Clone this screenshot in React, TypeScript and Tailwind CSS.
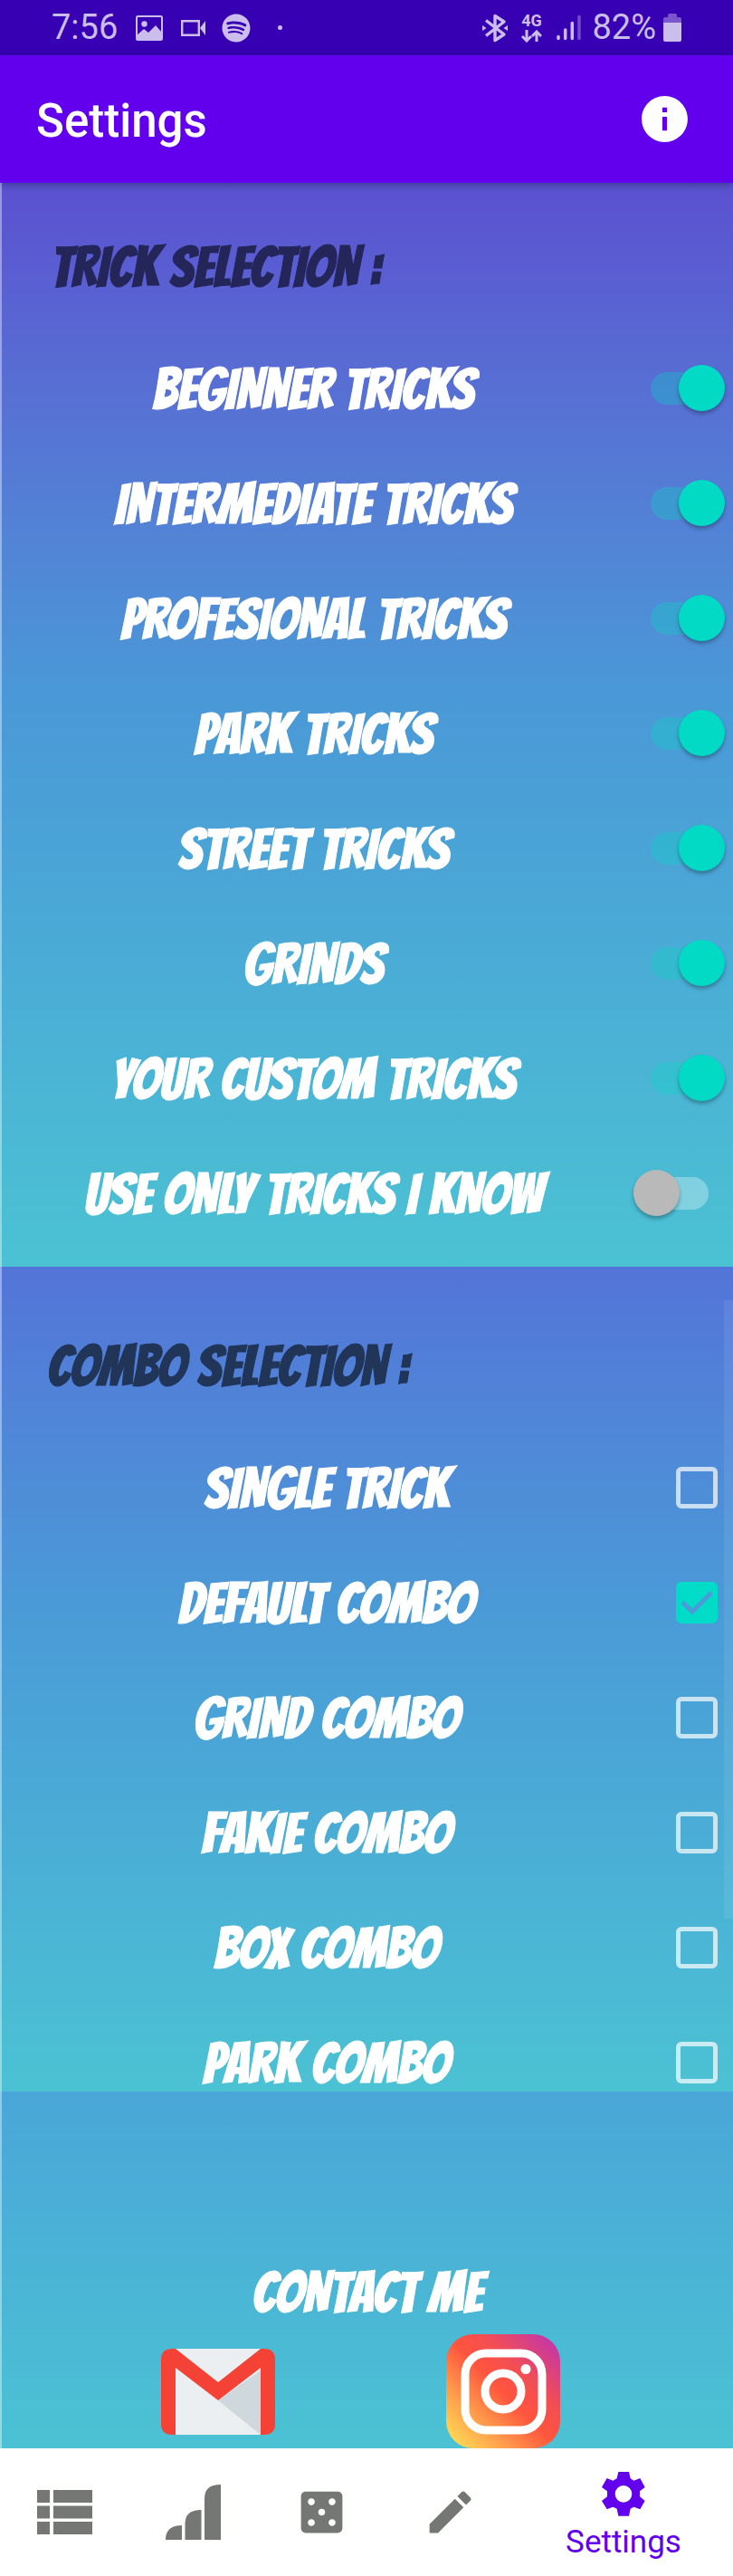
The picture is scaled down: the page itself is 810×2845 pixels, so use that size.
import { useState } from "react";
import type { ReactNode } from "react";
import { FaSpotify } from "react-icons/fa";
import { MdCasino, MdEdit, MdInfo } from "react-icons/md";

const TRICKS = [
  { label: "BEGINNER TRICKS", on: true },
  { label: "INTERMEDIATE TRICKS", on: true },
  { label: "PROFESIONAL TRICKS", on: true },
  { label: "PARK TRICKS", on: true },
  { label: "STREET TRICKS", on: true },
  { label: "GRINDS", on: true },
  { label: "YOUR CUSTOM TRICKS", on: true },
  { label: "USE ONLY TRICKS I KNOW", on: false },
];

const COMBOS = [
  { label: "SINGLE TRICK", on: false },
  { label: "DEFAULT COMBO", on: true },
  { label: "GRIND COMBO", on: false },
  { label: "FAKIE COMBO", on: false },
  { label: "BOX COMBO", on: false },
  { label: "PARK COMBO", on: false },
];

const comic =
  "font-['Bangers','Liberation_Sans_Narrow','Liberation_Sans',sans-serif] font-normal text-[63px] leading-[47px] whitespace-nowrap [-webkit-text-stroke:1px_currentColor]";

function StatusBar() {
  return (
    <div className="flex h-[61px] items-center justify-between bg-[#3700b3] pr-[57px] pl-[57px] text-[38px] text-[#cbbdec]">
      <div className="flex items-center">
        <span>7:56</span>
        <svg viewBox="0 0 30 28" className="ml-5 h-7 w-[30px]" fill="currentColor">
          <rect x="1" y="1" width="28" height="26" rx="1.5" fill="none" stroke="currentColor" strokeWidth="2" />
          <circle cx="9.500" cy="9.500" r="3.200" />
          <path d="M1 22l8-7 5 4 8-8 7 8v8H1z" />
        </svg>
        <svg viewBox="0 0 27 18" className="ml-5 h-[18px] w-[27px]">
          <path d="M1.200 1.200h18.600v15.600H1.200z" fill="none" stroke="currentColor" strokeWidth="2.400" />
          <path d="m21 9 6-8v16z" fill="currentColor" />
        </svg>
        <FaSpotify className="ml-[18px] size-8" />
        <span className="ml-[30px] size-[5px] rounded-full bg-[#cbbdec]" />
      </div>
      <div className="flex items-center">
        <svg viewBox="0 0 28 32" className="h-8 w-7" fill="none" stroke="currentColor" strokeWidth="3.400">
          <path d="M4 7.500 24 23 14 29.500v-27L24 9 4 24.500" strokeLinejoin="round" />
          <path d="m0 13 4.500 3L0 19zM28 13l-4.500 3 4.500 3z" fill="currentColor" stroke="none" />
        </svg>
        <span className="ml-[14px] flex flex-col items-center text-[18px] leading-4 font-bold">
          4G
          <svg viewBox="0 0 24 14" className="mt-0.5 h-3.5 w-6" fill="none" stroke="currentColor" strokeWidth="3">
            <path d="M7 0v11M2 7l5 5 5-5M18 13V2M13 7l5-5 5 5" />
          </svg>
        </span>
        <svg viewBox="0 0 27 30" className="ml-4 h-[30px] w-[27px]" fill="none" stroke="currentColor" strokeWidth="3.500" strokeLinecap="round">
          <path d="M2 24.500v2M9.700 17v9.500M17.300 9.500v17" />
          <path d="M25 2.500v24" opacity=".4" />
        </svg>
        <span className="ml-3">82%</span>
        <svg viewBox="0 0 20 31" className="ml-2 h-[31px] w-5" fill="currentColor">
          <path d="M0 10V6q0-2 2-2h3V2q0-2 2-2h6q2 0 2 2v2h3q2 0 2 2v4z" opacity=".45" />
          <path d="M0 10h20v19q0 2-2 2H2q-2 0-2-2z" />
        </svg>
      </div>
    </div>
  );
}

function Switch({ id, initial }: { id: string; initial: boolean }) {
  const [on, setOn] = useState(initial);
  return (
    <input
      id={id}
      type="checkbox"
      role="switch"
      checked={on}
      onChange={() => setOn(!on)}
      className="relative mr-[27px] mb-0.5 h-9 w-16 shrink-0 appearance-none rounded-full bg-white/30 before:absolute before:-top-2 before:-left-[19px] before:size-[51px] before:rounded-full before:bg-[#b9b9b9] before:shadow-[0_3px_4px_rgba(0,0,0,0.3)] checked:bg-[#03dac5]/30 checked:before:left-[31px] checked:before:bg-[#03dac5]"
    />
  );
}

function Check({ id, initial }: { id: string; initial: boolean }) {
  const [on, setOn] = useState(initial);
  return (
    <span className="relative mr-[17px] mb-0.5 grid size-[46px] shrink-0">
      <input
        id={id}
        type="checkbox"
        checked={on}
        onChange={() => setOn(!on)}
        className="size-[46px] appearance-none rounded-md border-[5px] border-white/70 checked:border-[#00dcc8] checked:bg-[#00dcc8]"
      />
      {on && (
        <svg viewBox="0 0 46 46" className="pointer-events-none absolute inset-0" fill="none" stroke="#4a9bd7" strokeWidth="5">
          <path d="m7 22.500 11 10.500 21-21" />
        </svg>
      )}
    </span>
  );
}

function Row({ id, label, children }: { id: string; label: string; children: ReactNode }) {
  return (
    <li className="flex h-[127px] items-center group-data-[clip=true]/list:last:h-[95px] group-data-[clip=true]/list:last:pt-8">
      <label htmlFor={id} className={`${comic} flex-1 pr-7 text-center text-white`}>
        {label}
      </label>
      {children}
    </li>
  );
}

function GmailLogo() {
  return (
    <svg viewBox="0 0 126 95" className="h-[95px] w-[126px]">
      <rect x="10" width="106" height="95" fill="#eceff1" />
      <path d="M63 57 110 24v71z" fill="#cfd8dc" />
      <path d="M16 0 63 37 110 0h4q12 0 12 12v71q0 12-12 12h-4V21L63 57 16 21v74h-4Q0 95 0 83V12Q0 0 12 0z" fill="#f44336" />
    </svg>
  );
}

function InstagramLogo() {
  return (
    <svg viewBox="0 0 126 126" className="size-[126px]">
      <defs>
        <linearGradient id="ig" x1="0" y1="1" x2="1" y2="0">
          <stop offset="4%" stopColor="#ffdd55" />
          <stop offset="28%" stopColor="#ff9a4c" />
          <stop offset="50%" stopColor="#ff543e" />
          <stop offset="66%" stopColor="#f34e53" />
          <stop offset="96%" stopColor="#c135ad" />
        </linearGradient>
      </defs>
      <rect width="126" height="126" rx="30" fill="url(#ig)" />
      <g fill="none" stroke="#fff" strokeWidth="9">
        <rect x="21" y="21" width="85" height="85" rx="23" />
        <circle cx="63" cy="63" r="20" />
      </g>
      <circle cx="88" cy="38.500" r="5.500" fill="#fff" />
    </svg>
  );
}

function BottomNav() {
  const item = "flex items-center justify-center text-[#757774]";
  return (
    <nav className="grid h-[141px] grid-cols-[repeat(4,71fr)_121fr] bg-white">
      <a href="#list" aria-label="Trick list" className={item}>
        <svg viewBox="0 0 61 49" className="h-[49px] w-[61px]" fill="currentColor">
          <path d="M0 0h14v14H0zM18 0h43v14H18zM0 17.500h14v14H0zM18 17.500h43v14H18zM0 35h14v14H0zM18 35h43v14H18z" />
        </svg>
      </a>
      <a href="#progress" aria-label="Progress" className={item}>
        <svg viewBox="0 0 61 61" className="size-[61px]" fill="currentColor">
          <path d="M0 61Q0 45 18 45v16zM21.500 61V43q0-15 18-15v33zM43 61V15Q43 0 61 0v61z" />
        </svg>
      </a>
      <a href="#dice" aria-label="Dice" className={item}>
        <MdCasino className="size-[61px]" />
      </a>
      <a href="#edit" aria-label="Edit" className={item}>
        <MdEdit className="size-[61px]" />
      </a>
      <a href="#settings" className="flex flex-col items-center pt-[26px] text-[35px] leading-[42px] text-[#6200ee]">
        <svg viewBox="0 0 144 147" className="mb-2 h-[49px] w-12" fill="currentColor" fillRule="evenodd">
          <path d="M55 0h35l5 22 11 7 21-8 16 30-17 13v18l17 14-16 28-21-8-11 6-5 24H55l-5-24-13-6-20 8L0 96l18-14V64L0 51l17-30 20 8 13-7zM72 45a28 28 0 1 0 0 56 28 28 0 1 0 0-56z" />
        </svg>
        Settings
      </a>
    </nav>
  );
}

export default function App() {
  return (
    <div className="w-full font-[Roboto,sans-serif]">
      <StatusBar />
      <header className="relative flex h-[141px] items-center justify-between bg-[#6200ee] pr-[45px] pl-10 text-white shadow-[0_2px_8px_rgba(0,0,0,0.3)]">
        <h1 className="pt-1 text-[51px] leading-[58px] font-medium">Settings</h1>
        <button type="button" aria-label="About">
          <MdInfo className="size-[61px]" />
        </button>
      </header>
      <main>
        <section className="border-l-2 border-white/40 bg-linear-to-b from-[#5b50d0] via-[#4a98d7] via-47% to-[#4bc2d3] bg-origin-border pt-[69px] pb-[17px]">
          <h2 className={`${comic} pb-12 pl-[54px] text-[#24265a]`}>TRICK SELECTION :</h2>
          <ul>
            {TRICKS.map((t, i) => (
              <Row key={t.label} id={`trick-${i}`} label={t.label}>
                <Switch id={`trick-${i}`} initial={t.on} />
              </Row>
            ))}
          </ul>
        </section>
        <section className="relative border-l-2 border-white/40 bg-linear-to-b from-[#5374d8] via-[#4a9bd7] via-42% to-[#4bc2d3] bg-origin-border pt-[86px]">
          <h2 className={`${comic} pb-12 pl-[50px] text-[#203558]`}>COMBO SELECTION :</h2>
          <ul data-clip="true" className="group/list">
            {COMBOS.map((c, i) => (
              <Row key={c.label} id={`combo-${i}`} label={c.label}>
                <Check id={`combo-${i}`} initial={c.on} />
              </Row>
            ))}
          </ul>
          <div className="absolute top-[37px] right-0 h-3/4 w-2.5 bg-white/8" />
        </section>
        <section className="border-l-2 border-white/40 bg-linear-to-b from-[#4aa6d8] to-[#4bc2d3] bg-origin-border pt-[198px]">
          <h2 className={`${comic} text-center text-white`}>CONTACT ME</h2>
          <div className="mt-[23px] flex items-center justify-center gap-[189px] pr-4">
            <a href="#gmail" aria-label="Gmail">
              <GmailLogo />
            </a>
            <a href="#instagram" aria-label="Instagram">
              <InstagramLogo />
            </a>
          </div>
        </section>
      </main>
      <BottomNav />
    </div>
  );
}
